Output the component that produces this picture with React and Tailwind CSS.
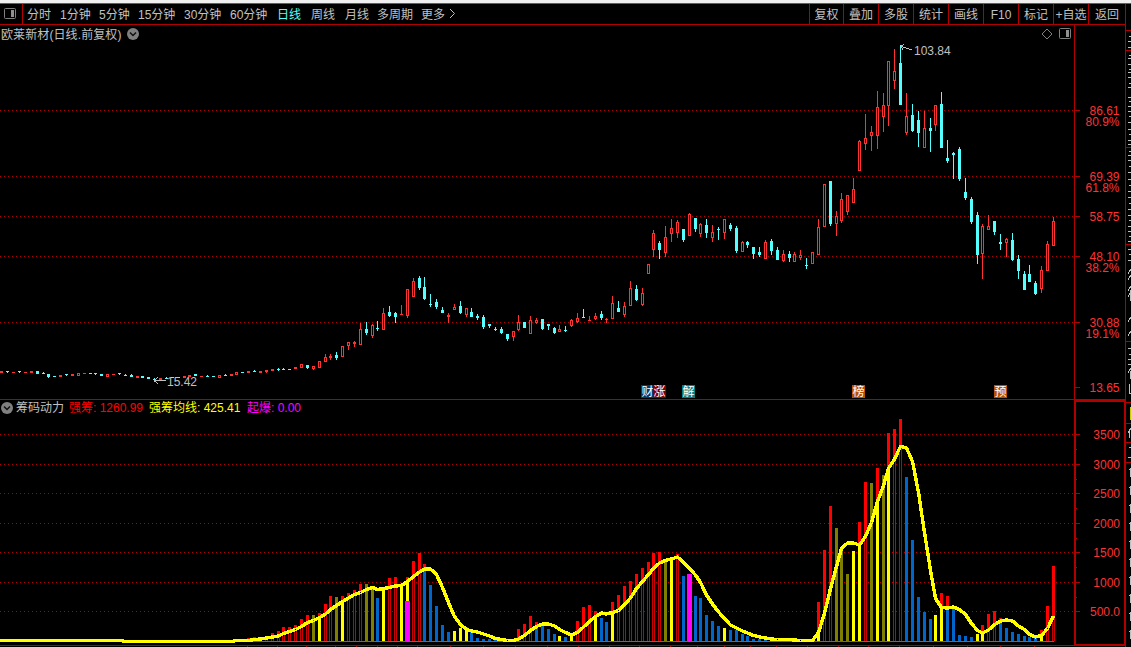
import React from "react";

const RED = "#ff3232";
const CYAN = "#54ffff";
const FRAME = "#b00000";

/* toolbar */
const periods = [
  { label: "分时", width: "w-[33px]" },
  { label: "1分钟", width: "w-[39px]" },
  { label: "5分钟", width: "w-[39px]" },
  { label: "15分钟", width: "w-[46px]" },
  { label: "30分钟", width: "w-[46px]" },
  { label: "60分钟", width: "w-[47px]" },
  { label: "日线", width: "w-[34px]", active: true },
  { label: "周线", width: "w-[34px]" },
  { label: "月线", width: "w-[32px]" },
  { label: "多周期", width: "w-[44px]" },
  { label: "更多", width: "w-[27px]" },
];

const tools = [
  { label: "复权", width: "w-[34px]" },
  { label: "叠加", width: "w-[35px]" },
  { label: "多股", width: "w-[35px]" },
  { label: "统计", width: "w-[35px]" },
  { label: "画线", width: "w-[35px]" },
  { label: "F10", width: "w-[35px]" },
  { label: "标记", width: "w-[35px]" },
  { label: "+自选", width: "w-[35px]" },
  { label: "返回", width: "w-[37px]" },
];

/* candles: direction, high, body top, body bottom, low */
const candles = `
r 371 371 373 373|c 371 371 372 373|r 372 372 373 373|c 371 371 372 373|r 372 372 373 373|r 371 371 373 373
c 371 371 374 374|c 372 373 374 374|c 374 374 377 378|c 376 376 377 377|r 375 375 377 377|c 374 374 375 376
r 374 374 376 376|r 373 373 376 376|r 373 373 374 374|c 373 373 374 374|c 373 373 374 375|c 374 374 376 376
r 374 374 377 377|r 374 374 375 375|c 373 373 374 375|c 374 375 376 376|c 374 375 377 377|r 376 376 378 378
c 376 376 378 378|c 377 377 379 379|c 378 379 380 381|r 378 378 380 380|c 377 378 379 379|c 377 377 378 378
c 377 377 378 378|r 376 376 378 378|r 375 375 377 377|c 374 374 376 376|r 376 376 377 377|c 375 376 377 377
c 376 376 377 377|r 375 375 378 378|c 374 375 376 376|r 374 374 376 376|r 372 372 375 375|c 372 372 373 373
r 371 371 373 373|c 370 371 372 372|r 371 371 373 373|r 370 370 372 373|r 369 369 371 371|c 368 369 370 371
c 368 369 370 370|c 369 369 370 370|r 367 367 369 369|r 364 364 368 368|c 365 365 368 369|r 366 366 369 370
r 361 361 368 368|r 354 357 362 362|r 354 356 358 360|c 352 355 358 360|r 346 346 357 357|r 342 342 346 350
r 341 342 344 347|r 323 329 345 345|c 322 329 333 335|r 324 325 336 338|c 321 328 329 331|r 308 313 330 330
c 306 312 316 317|c 312 313 317 323|r 305 314 315 315|r 289 289 316 318|r 278 281 297 297|c 276 278 288 290
c 277 287 299 300|c 294 304 305 307|c 299 302 307 309|c 307 310 313 313|r 313 315 317 323|r 304 307 310 310
c 301 306 313 314|r 308 308 315 317|c 308 312 317 317|c 314 316 318 320|c 315 317 327 329|c 324 324 326 328
c 327 329 330 331|c 327 329 333 334|c 334 334 339 341|r 331 331 337 341|r 315 322 330 331|c 322 322 328 328
r 316 320 334 334|r 318 320 323 324|c 319 319 329 330|c 324 324 326 330|c 327 328 333 334|r 325 329 332 332
c 326 330 331 332|r 319 320 326 327|r 313 318 322 323|c 309 317 318 318|r 316 320 321 321|r 313 316 319 320
c 311 314 318 320|r 318 319 320 323|r 296 303 319 319|c 301 308 312 312|r 302 306 315 317|r 281 288 306 306
c 285 289 300 301|r 288 293 305 306|r 264 264 274 274|r 230 233 250 257|c 241 243 250 259|r 226 237 253 257
r 219 228 234 242|r 220 222 233 238|c 229 229 240 242|r 213 214 236 236|c 218 218 229 232|r 223 224 234 237
c 219 225 233 238|r 225 232 238 242|c 227 229 230 240|r 219 219 233 239|c 223 225 229 231|c 226 228 251 253
r 241 242 252 252|c 241 242 245 248|c 247 247 254 259|c 247 252 255 257|r 240 242 259 259|c 239 241 251 255
c 247 250 260 260|r 250 254 261 262|c 251 254 258 262|r 252 254 262 262|r 250 255 258 260|c 258 265 266 269
r 252 252 264 264|r 219 227 255 255|r 184 184 227 227|c 181 181 224 226|r 211 216 224 236|r 193 199 221 223
r 195 195 212 215|r 178 189 203 203|r 140 141 171 171|r 114 138 144 150|r 126 132 136 151|r 91 107 136 149
r 93 105 117 132|r 61 61 106 126|r 49 71 81 89|c 45 63 105 105|r 93 116 133 135|c 104 115 131 132
c 111 120 133 147|r 111 128 148 148|c 118 128 131 152|r 105 105 125 131|c 92 104 148 148|c 140 158 161 163
c 152 153 155 179|c 147 149 179 181|c 178 192 198 200|c 197 199 222 224|c 212 215 255 264|r 224 226 254 279
r 215 226 230 230|c 221 221 232 235|c 234 242 244 250|r 238 239 243 257|c 233 240 260 261|c 255 259 271 279
c 271 274 290 290|c 265 274 282 282|c 281 283 294 295|r 266 270 289 293|r 241 244 271 271|r 217 221 246 246`
  .trim()
  .split(/[|\n]/)
  .map((row) => {
    const [dir, ...v] = row.split(" ");
    const [high, top, bottom, low] = v.map(Number);
    return { up: dir === "r", high, top, bottom, low };
  });

/* indicator from bar 42 on: kind, bar top, average line */
const FIRST_BAR = 42;
const bars = `
r 638 640|r 637 639|r 638 638.5|r 637 637.5|r 633 636.5|r 631 635.5|r 627 633|r 627 631|r 625 629|r 619 626
r 615 622|o 615 620|y 613 617|r 604 613.5|r 596 609|o 597 605|y 596 601|r 593 597.5|r 590 594|r 584 592
o 584 589|o 587 587|b 598 589|y 588 588|r 578 587|r 577 585.5|y 585 585|m 577 581|r 561 576|r 553 571.5
b 564 568.5|b 585 568.5|b 606 574|b 625 587|b 632 602|y 631 616|y 628 624|y 627 629|b 631 630.5|b 638 631.5
b 639 633.5|b 639 635.5|b 640 638|n 641 639|n 641 640|n 641 640|r 629 638.5|r 624 635|r 616 630|b 622 626
b 625 623.5|b 629 623.5|b 634 625.5|y 636 629|b 637 632|y 635 634.5|r 621 632|r 607 626.5|r 605 621|y 611 616
b 618 612.5|b 622 613.5|y 602 612|r 595 610|r 586 604|r 581 597.5|r 574 588|r 568 581|r 562 574|r 553 568
r 552 562.5|o 560 560|y 559 558.5|r 554 556.5|b 576 562|m 574 568|b 596 574.5|b 598 582|b 615 594.5|b 621 603.5
b 626 611.5|y 628 618|b 630 624.5|b 630 627.5|b 634 630.5|b 636 632.5|b 639 635|b 639 636.5|b 639 637.5|b 640 638.5
n 641 639|n 641 639|n 641 639|n 641 639.5|n 641 640|n 641 640|n 641 640|y 602 632|r 550 613|r 506 588
o 528 566|o 550 548|o 574 542.5|y 551 542.5|y 522 544.5|r 482 536|o 483 522|y 468 501|o 475 485|y 433 468
r 429 458.5|r 419 446|b 477 447.5|b 540 461|b 597 492|b 612 532|b 619 570|y 615 598|y 593 607|b 596 607.5
b 608 606.5|b 635 609|b 636 614|b 637 623|y 634 630|y 625 632.5|r 614 629.5|r 611 624|b 618 620.5|b 628 619.5
b 632 620.5|b 634 625.5|b 636 629|b 637 634|b 638 636.5|y 630 635|r 606 628|r 566 615.5`
  .trim()
  .split(/[|\n]/)
  .map((row) => {
    const [kind, top, ma] = row.split(" ");
    return { kind, top: Number(top), ma: Number(ma) };
  });

const barColors = { o: "#808000", y: "#ffff00", b: "#0066cc", m: "#ff00ff" };
const BASE = 641;

const barX = (i) => 1 + Math.ceil(i * 5.875 - (i >= 95 ? 0.125 : 0));

const priceLevels = [
  { y: 110, price: "86.61", pct: "80.9%" },
  { y: 176, price: "69.39", pct: "61.8%" },
  { y: 216, price: "58.75" },
  { y: 256, price: "48.10", pct: "38.2%" },
  { y: 322, price: "30.88", pct: "19.1%" },
  { y: 387, price: "13.65" },
];

const powerLevels = [
  { y: 434, label: "3500" },
  { y: 464, label: "3000" },
  { y: 493, label: "2500" },
  { y: 523, label: "2000" },
  { y: 552, label: "1500" },
  { y: 582, label: "1000" },
  { y: 611, label: "500.0" },
];

const badges = [
  { x: 641, text: "财", fill: "#003a70" },
  { x: 653, text: "涨", fill: "#800000" },
  { x: 682, text: "解", fill: "#008080" },
  { x: 852, text: "榜", fill: "#b85000" },
  { x: 994, text: "预", fill: "#b85000" },
];

const monthTicks = [
  247, 277, 306, 335, 356, 377, 397, 417, 450, 483, 515, 547, 578, 609, 639,
  670, 697, 724, 750, 776, 807, 838, 868, 899, 933, 967, 1000, 1034,
];

export default function App() {
  return (
    <div className="flex h-[647px] w-[1131px] flex-col overflow-hidden bg-black text-xs text-[#c0c0c0] [font-family:'Liberation_Sans','Noto_Sans_CJK_SC',sans-serif]">
      <div className="h-1 shrink-0 border-b border-[#606060] bg-[#f0f0f0]"></div>
      <div className="flex min-h-0 flex-1">
        <div className="flex w-[1126px] shrink-0 flex-col border-r border-[#b00000]">
          <Toolbar />
          <div className="flex min-h-0 flex-1">
            <div className="flex w-[1074px] shrink-0 flex-col">
              <PriceTitle />
              <PriceChart />
              <PowerTitle />
              <PowerChart />
            </div>
            <Axis />
          </div>
        </div>
        <SideStrip />
      </div>
    </div>
  );
}

function Toolbar() {
  return (
    <div className="flex h-[21px] shrink-0 border-b border-[#b00000] leading-[22px] whitespace-nowrap">
      <div className="flex w-[23px] items-center border-r border-[#b00000] pl-1">
        <PanelIcon />
      </div>
      <div className="flex pl-[4px]">
        {periods.map((p) => (
          <div
            key={p.label}
            className={`h-5 shrink-0 ${p.width} ${p.active ? "text-[#54ffff]" : ""}`}
          >
            {p.label}
          </div>
        ))}
        <svg width="8" height="20" className="shrink-0">
          <path d="M2 5 L6.5 9.5 L2 14" fill="none" stroke="#c0c0c0" />
        </svg>
      </div>
      <div className="ml-auto flex">
        {tools.map((t) => (
          <div
            key={t.label}
            className={`h-5 shrink-0 border-l border-[#b00000] text-center ${t.width}`}
          >
            {t.label}
          </div>
        ))}
      </div>
    </div>
  );
}

function PriceTitle() {
  return (
    <div className="flex h-[18px] shrink-0 items-center pr-[2px] pl-[1px] whitespace-nowrap">
      <span className="w-[126px] pt-0.5 leading-4 tracking-[0.1px]">
        欧莱新材(日线.前复权)
      </span>
      <DropIcon />
      <svg width="12" height="12" className="mr-[6px] ml-auto">
        <path d="M6 1 L11 6 L6 11 L1 6 Z" fill="none" stroke="#808080" />
      </svg>
      <PanelIcon />
    </div>
  );
}

function PowerTitle() {
  return (
    <div className="flex h-[17px] shrink-0 items-center border-t border-[#b00000] pl-[1px] leading-[18px] whitespace-nowrap">
      <DropIcon />
      <span className="ml-[3px] w-[53px]">筹码动力</span>
      <span className="w-20 text-[#ff0000]">强筹: 1260.99</span>
      <span className="w-[98px] text-[#ffff00]">强筹均线: 425.41</span>
      <span className="text-[#ff00ff]">起爆: 0.00</span>
    </div>
  );
}

/* 1px dots every 4px */
function GridLine({ y }) {
  return (
    <line
      x1="0"
      x2="1074"
      y1={y + 0.5}
      y2={y + 0.5}
      stroke={FRAME}
      strokeDasharray="1 3"
    />
  );
}

function PriceChart() {
  return (
    <svg
      width="1074"
      height="356"
      viewBox="0 43 1074 356"
      shapeRendering="crispEdges"
      className="block shrink-0"
    >
      {priceLevels.slice(0, 5).map((l) => (
        <GridLine key={l.y} y={l.y} />
      ))}
      {candles.map((c, i) => (
        <Candle key={i} x={barX(i)} {...c} />
      ))}

      {/* lowest / highest price */}
      <path d="M154 380.5 H166 M154 380.5 L158 377.5 M154 380.5 L158 384" fill="none" stroke="#c0c0c0" />
      <text x="167" y="386" fill="#c0c0c0">
        15.42
      </text>
      <path d="M901 46.5 L912 50 M901 46 L904 44.5 M901 46 L903 50" fill="none" stroke="#c0c0c0" />
      <text x="914" y="55" fill="#c0c0c0">
        103.84
      </text>

      {badges.map((b) => (
        <g key={b.text}>
          <rect x={b.x} y="385" width="13" height="13" fill={b.fill} />
          <text x={b.x + 0.5} y="396" fill="#ffffff">
            {b.text}
          </text>
        </g>
      ))}
    </svg>
  );
}

function Candle({ x, up, high, top, bottom, low }) {
  const color = up ? RED : CYAN;
  const h = bottom - top;
  return (
    <g fill={color}>
      {top > high && <rect x={x} y={high} width="1" height={top - high} />}
      {low > bottom && <rect x={x} y={bottom} width="1" height={low - bottom} />}
      {up && h > 2 ? (
        <rect x={x - 0.5} y={top + 0.5} width="2" height={h - 1} fill="#000000" stroke={color} />
      ) : (
        <rect x={x - 1} y={top} width="3" height={h} />
      )}
    </g>
  );
}

function PowerChart() {
  const line = [
    "0,640.5",
    "122,640.5",
    "124,641.5",
    "232,641.5",
    "236,640.5",
    ...bars.map((b, i) => `${barX(i + FIRST_BAR) + 0.5},${b.ma + 0.5}`),
  ].join(" ");

  return (
    <svg
      width="1074"
      height="231"
      viewBox="0 416 1074 231"
      shapeRendering="crispEdges"
      className="block shrink-0"
    >
      {powerLevels.map((l) => (
        <GridLine key={l.y} y={l.y} />
      ))}
      {bars.map((b, i) => (
        <PowerBar key={i} x={barX(i + FIRST_BAR)} {...b} />
      ))}
      <rect x="0" y={BASE} width="1054" height="1" fill="#ff00ff" />
      <polyline points={line} fill="none" stroke="#ffff00" strokeWidth="3.4" strokeLinejoin="round" />

      {/* time axis */}
      <rect x="0" y="645" width="1074" height="1" fill={FRAME} />
      {monthTicks.map((x) => (
        <rect key={x} x={x} y="646" width="1" height="1" fill={FRAME} />
      ))}
    </svg>
  );
}

function PowerBar({ x, kind, top, ma }) {
  if (kind === "n") return null;
  const split = Math.max(top, Math.round(ma));
  const overLine = top < split && kind !== "o";

  return (
    <g>
      {overLine && <rect x={x - 1} y={top} width="3" height={split - top} fill="#ff0000" />}
      {kind === "r" && (
        <g fill="#cc0000">
          <rect x={x - 1} y={split} width="3" height={BASE - split} fill="#000000" />
          <rect x={x - 1} y={split} width="1" height={BASE - split} />
          <rect x={x + 1} y={split} width="1" height={BASE - split} />
        </g>
      )}
      {kind === "o" && <rect x={x - 1} y={top} width="3" height={BASE - top} fill={barColors.o} />}
      {(kind === "y" || kind === "b") && (
        <rect x={x - 1} y={split} width="3" height={BASE - split} fill={barColors[kind]} />
      )}
      {kind === "m" && (
        <g>
          {overLine && <rect x={x - 1} y={split} width="3" height={601 - split} fill="#ffff00" />}
          <rect
            x={x - 2}
            y={overLine ? 601 : top}
            width="5"
            height={BASE - (overLine ? 601 : top)}
            fill={barColors.m}
          />
        </g>
      )}
    </g>
  );
}

function Axis() {
  return (
    <svg
      width="52"
      height="622"
      viewBox="1074 25 52 622"
      shapeRendering="crispEdges"
      className="-mr-px block shrink-0"
    >
      <rect x="1074" y="25" width="1" height="375" fill={FRAME} />
      <rect x="1074" y="399" width="52" height="1" fill={FRAME} />
      <rect x="1075" y="401" width="50" height="244" fill="none" stroke={FRAME} strokeWidth="2" />

      {priceLevels.map((l) => (
        <g key={l.y} fill={RED} textAnchor="end">
          <rect x="1075" y={l.y} width="5" height="1" fill={FRAME} />
          <text x="1119.5" y={l.y + 5}>
            {l.price}
          </text>
          {l.pct && (
            <text x="1119.5" y={l.y + 16}>
              {l.pct}
            </text>
          )}
        </g>
      ))}

      {powerLevels.map((l) => (
        <g key={l.y} fill={RED} textAnchor="end">
          <rect x="1076" y={l.y} width="4" height="1" fill={FRAME} />
          {l.y < 611 && <rect x="1076" y={l.y + 15} width="1" height="1" fill={FRAME} />}
          <text x="1120" y={l.y + 5}>
            {l.label}
          </text>
        </g>
      ))}
    </svg>
  );
}

/* edge of the quote panel, cut off by the window */
function SideStrip() {
  const dividers = [30, 50, 147, 244, 341, 402, 423, 442, 462];
  const marks = [
    36, 41, 47, 55, 58, 64, 69, 72, 77, 83, 87, 97, 101, 106, 111, 116, 122,
    129, 134, 140, 144, 151, 155, 160, 166, 172, 179, 185, 191, 197, 203, 209,
    215, 220, 226, 231, 236, 241, 249, 254, 260, 348, 354, 359, 364, 447, 457,
  ];
  const slants = [269, 275, 286, 292, 317, 331, 428, 368];
  const ones = [468, 486, 504, 522, 540, 558, 576, 594, 612, 630];

  return (
    <svg
      width="5"
      height="643"
      viewBox="1126 4 5 643"
      shapeRendering="crispEdges"
      className="block shrink-0"
    >
      {dividers.map((y) => (
        <rect key={y} x="1126" y={y} width="5" height="1" fill={FRAME} />
      ))}
      <g fill="#c0c0c0">
        {marks.map((y, i) => (
          <rect key={y} x={i % 3 ? 1128 : 1129} y={y} width="3" height="1" />
        ))}
        {ones.map((y) => (
          <g key={y}>
            <rect x="1129" y={y + 1} width="1" height="1" />
            <rect x="1130" y={y} width="1" height="9" />
          </g>
        ))}
        <rect x="1129" y="384" width="1" height="9" />
        <rect x="1129" y="393" width="2" height="1" />
        <rect x="1130" y="290" width="1" height="11" />
        <rect x="1130" y="371" width="1" height="8" />
        <rect x="1129" y="431" width="1" height="7" />
      </g>
      {slants.map((y) => (
        <path key={y} d={`M1131 ${y} L1128 ${y + 5}`} stroke="#c0c0c0" />
      ))}
      <rect x="1130" y="407" width="1" height="13" fill="#cccc00" />
    </svg>
  );
}

function PanelIcon() {
  return (
    <svg width="13" height="12" className="shrink-0">
      <rect x="0.5" y="0.5" width="11" height="10" rx="1" fill="none" stroke="#808080" />
      <rect x="7" y="2" width="3" height="7" fill="#909090" />
    </svg>
  );
}

function DropIcon() {
  return (
    <svg width="12" height="12" className="shrink-0">
      <circle cx="6" cy="6" r="6" fill="#808080" />
      <path d="M3 4.5 L6 7.5 L9 4.5" fill="none" stroke="#101010" strokeWidth="1.5" />
    </svg>
  );
}
